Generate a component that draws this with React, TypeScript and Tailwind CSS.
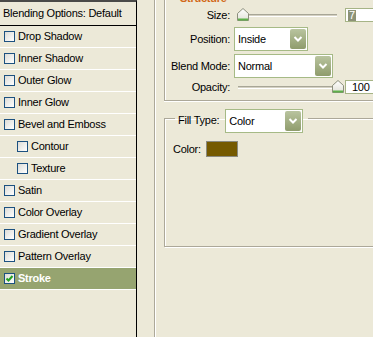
import React from "react";

const font = { fontFamily: '"Liberation Sans", Arial, sans-serif' };

function Check({ checked }: { checked?: boolean }) {
  return (
    <span className="flex h-[11px] w-[11px] shrink-0 items-center justify-center border border-[#1c5180] bg-gradient-to-br from-[#dcdcd7] to-white">
      {checked && (
        <svg width="9" height="9" viewBox="0 0 9 9">
          <path d="M1.5 4.5 L3.5 6.5 L7.5 2" fill="none" stroke="#21a121" strokeWidth="2" />
        </svg>
      )}
    </span>
  );
}

const effects: { label: string; indent?: boolean }[] = [
  { label: "Drop Shadow" },
  { label: "Inner Shadow" },
  { label: "Outer Glow" },
  { label: "Inner Glow" },
  { label: "Bevel and Emboss" },
  { label: "Contour", indent: true },
  { label: "Texture", indent: true },
  { label: "Satin" },
  { label: "Color Overlay" },
  { label: "Gradient Overlay" },
  { label: "Pattern Overlay" },
];

function Thumb() {
  return (
    <svg width="12" height="13" viewBox="0 0 12 13">
      <defs>
        <linearGradient id="tg" x1="0" y1="0" x2="0" y2="1">
          <stop offset="0" stopColor="#ffffff" />
          <stop offset="1" stopColor="#e2e2d8" />
        </linearGradient>
      </defs>
      <path d="M0.5 5.5 L6 0.5 L11.5 5.5 L11.5 12.5 L0.5 12.5 Z" fill="url(#tg)" stroke="#8c8f7c" />
      <path d="M1 11.5 H11" stroke="#5fb04a" strokeWidth="2" />
    </svg>
  );
}

function Slider({ at }: { at: number }) {
  return (
    <div className="relative flex h-[14px] w-[108px] items-center">
      <div className="ml-[4px] h-[3px] w-[99px] border-t border-[#a8a697] bg-[#d4d1c2] border-b border-b-white" />
      <div className="absolute top-[0px]" style={{ left: at }}>
        <Thumb />
      </div>
    </div>
  );
}

function Arrow() {
  return (
    <span className="flex h-full w-[16px] items-center justify-center rounded-[2px] bg-gradient-to-b from-[#b9c49f] to-[#8f9c6c]">
      <svg width="10" height="8" viewBox="0 0 10 8">
        <path d="M1.5 2 L5 5.5 L8.5 2" fill="none" stroke="#fff" strokeWidth="2" />
      </svg>
    </span>
  );
}

function Select({ value, w, h }: { value: string; w: string; h: string }) {
  return (
    <div className={`flex ${w} ${h} items-stretch border border-[#a6ba86] bg-white p-[1px]`}>
      <span className="flex flex-1 items-center pl-[2px] text-[11px] text-black">{value}</span>
      <Arrow />
    </div>
  );
}

export default function App() {
  return (
    <div
      className="flex h-[337px] w-[373px] overflow-hidden bg-[#ece9d8] text-[11px] tracking-[-0.25px] text-black"
      style={font}
    >
      {/* effects list */}
      <div className="flex w-[137px] shrink-0 flex-col border-r border-black border-t-2 border-t-[#4a4a48]">
        <div className="flex h-[24px] items-center border-b border-black pl-[3px]">
          Blending Options: Default
        </div>
        {effects.map((e) => (
          <div
            key={e.label}
            className={`flex h-[22px] items-center border-b border-white ${e.indent ? "pl-[17px]" : "pl-[4px]"}`}
          >
            <Check />
            <span className="ml-[3px]">{e.label}</span>
          </div>
        ))}
        <div className="flex h-[22px] items-center border-b border-white bg-[#96a470] pl-[4px]">
          <Check checked />
          <span className="ml-[3px] font-bold text-white">Stroke</span>
        </div>
      </div>

      <div className="w-[17px] shrink-0" />
      <div className="w-[2px] shrink-0 border-l border-[#aca899] bg-white" />

      {/* settings */}
      <div className="flex flex-1 flex-col pl-[8px]">
        <div className="flex w-[230px] flex-col border-l border-b border-[#aca899] shadow-[inset_1px_0_0_#fff,0_1px_0_#fff]">
          <div className="h-[4px] overflow-hidden pl-[15px]">
            <div className="-mt-[10px] font-bold text-[#d2691a]">Structure</div>
          </div>
          <div className="mt-[4px] flex h-[14px] items-center">
            <span className="w-[65px] text-right">Size:</span>
            <div className="ml-[4px]">
              <Slider at={3} />
            </div>
            <div className="ml-[3px] flex h-[14px] w-[40px] items-center border border-[#a6b486] bg-white pl-[2px]">
              <span className="bg-[#8c9276] px-[1px] leading-[11px] text-white">7</span>
            </div>
          </div>
          <div className="mt-[5px] flex items-center">
            <span className="w-[65px] text-right">Position:</span>
            <div className="ml-[4px]">
              <Select value="Inside" w="w-[74px]" h="h-[24px]" />
            </div>
          </div>
          <div className="mt-[3px] flex items-center">
            <span className="w-[65px] text-right">Blend Mode:</span>
            <div className="ml-[4px]">
              <Select value="Normal" w="w-[99px]" h="h-[24px]" />
            </div>
          </div>
          <div className="mt-[2px] flex h-[14px] items-center">
            <span className="w-[65px] text-right">Opacity:</span>
            <div className="ml-[4px]">
              <Slider at={98} />
            </div>
            <div className="ml-[3px] flex h-[14px] w-[40px] items-center border border-[#a6b486] bg-white pl-[6px]">
              100
            </div>
          </div>
          <div className="h-[6px]" />
        </div>

        <fieldset className="mt-[8px] h-[138px] w-[230px] border border-[#aca899] shadow-[inset_1px_1px_0_#fff,1px_1px_0_#fff]">
          <legend className="ml-[10px] flex h-[18px] items-start pl-[3px] pr-[5px]">
            <span className="mt-[3px]">Fill Type:</span>
            <div className="ml-[6px]">
              <Select value="Color" w="w-[78px]" h="h-[24px]" />
            </div>
          </legend>
          <div className="mt-[14px] flex items-center pl-[8px]">
            <span>Color:</span>
            <span className="ml-[5px] h-[16px] w-[32px] border border-[#8a8a80] bg-[#755a00]" />
          </div>
        </fieldset>
      </div>
    </div>
  );
}
